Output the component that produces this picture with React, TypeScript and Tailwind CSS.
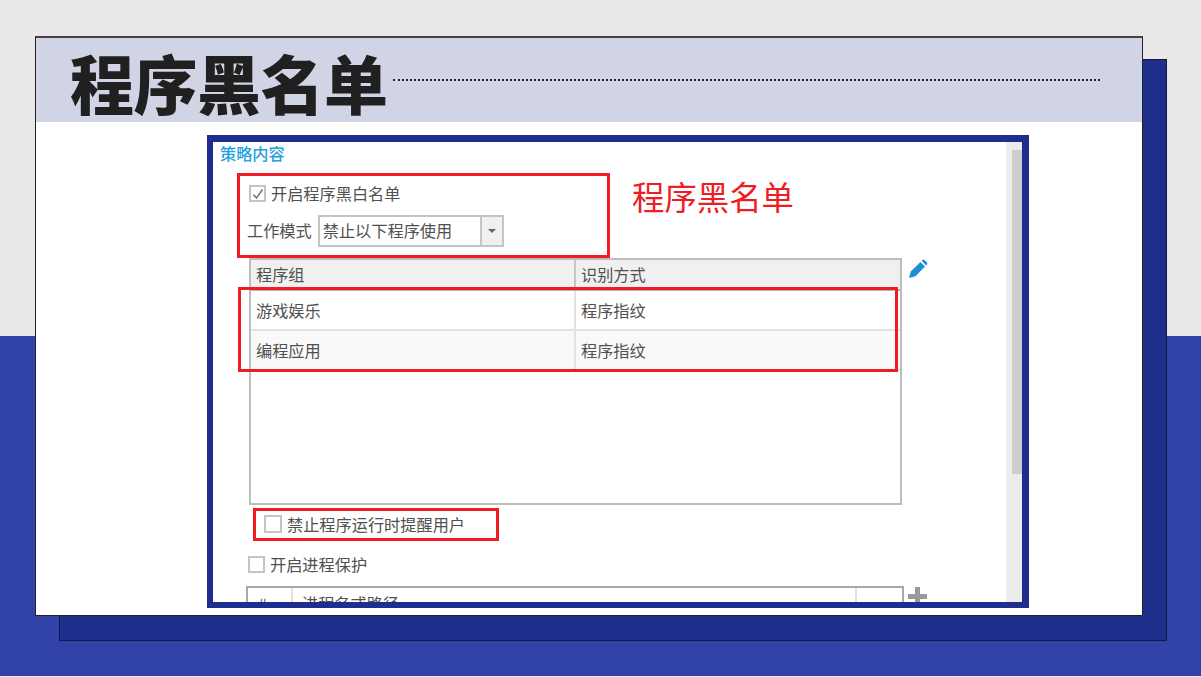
const font = "[font-family:'Noto_Sans_CJK_SC','Noto_Sans',sans-serif]";

function Check({ checked, className }: { checked?: boolean; className: string }) {
  return (
    <span className={`flex items-center justify-center border-2 border-[#c4c4c4] bg-white ${className}`}>
      {checked && (
        <svg width="12" height="12" viewBox="0 0 12 12" fill="none" stroke="#7a7a7a" strokeWidth="1.6">
          <path d="M1.5 6.5 L4.5 10 L10.5 1.5" />
        </svg>
      )}
    </span>
  );
}

function Row({ a, b, alt }: { a: string; b: string; alt?: boolean }) {
  return (
    <div className={`flex h-10 border-b-2 border-[#e2e2e2] ${alt ? "bg-[#f9f9f9]" : "bg-white"}`}>
      <div className="flex w-[325px] items-center border-r-2 border-[#e2e2e2] pl-[5px]">{a}</div>
      <div className="flex flex-1 items-center pl-[5px]">{b}</div>
    </div>
  );
}

function Pencil() {
  return (
    <svg className="ml-[6px] mt-[1px] shrink-0" width="20" height="20" viewBox="0 0 20 20" fill="#1c8fd6">
      <path d="M1 19 L2.8 12.6 L12.4 3 L17 7.6 L7.4 17.2 Z" />
      <path d="M13.6 1.8 L14.4 1 Q15.4 0.2 16.4 1 L19 3.6 Q19.8 4.6 19 5.6 L18.2 6.4 Z" />
    </svg>
  );
}

function Plus() {
  return (
    <svg className="ml-[4px] mt-[1px] shrink-0" width="19" height="19" viewBox="0 0 19 19" fill="#999">
      <path d="M7 0 H12 V7 H19 V12 H12 V19 H7 V12 H0 V7 H7 Z" />
    </svg>
  );
}

export default function App() {
  return (
    <div className={`relative h-[677px] w-[1201px] overflow-hidden bg-[#eef0f3] ${font}`}>
      <div className="h-[336px] bg-[#e9e7e7]" />
      <div className="h-[340px] bg-[#3143a8]" />

      {/* back card */}
      <div className="absolute left-[59px] top-[59px] h-[582px] w-[1108px] border border-[#14193f] bg-[#1e2e8b]" />

      {/* front card */}
      <div className="absolute left-[35px] top-[36px] flex h-[580px] w-[1108px] flex-col border border-[#222] border-t-2 border-t-[#444] bg-white">
        <div className="flex h-[84px] shrink-0 items-center bg-[#d0d4e5] pl-[34px]">
          <h1 className="pt-[2px] text-[64px] font-black leading-none tracking-[-0.5px] text-[#202020]">程序黑名单</h1>
          <div className="ml-[5px] w-[707px] border-t-2 border-dotted border-[#222]" />
        </div>

        {/* screenshot frame */}
        <div className="relative ml-[171px] mt-[13px] h-[473px] w-[822px] overflow-hidden border-y-[6px] border-l-[6px] border-r-[7px] border-t-[7px] border-[#1f2e8e] bg-white text-[16.2px] leading-none text-[#505050]">
          <div className="flex h-full">
            <div className="relative flex-1 overflow-hidden">
              <div className="pl-[7px] pt-[3px] text-[16.2px] font-medium leading-[16px] text-[#1da1e0]">策略内容</div>

              <div className="ml-[36px] mt-[24px] flex items-center gap-[5px]">
                <Check checked className="size-[17px]" />
                <span>开启程序黑白名单</span>
              </div>

              <div className="ml-[34px] mt-[13px] flex items-center gap-[6px]">
                <span className="pb-[2px]">工作模式</span>
                <div className="flex h-[32px] w-[186px] border-2 border-[#c4c4c4] bg-white">
                  <span className="flex flex-1 items-center pb-[2px] pl-[3px]">禁止以下程序使用</span>
                  <span className="flex w-[22px] items-center justify-center border-l-2 border-[#c4c4c4] bg-[#f0f0f0]">
                    <span className="h-0 w-0 border-x-[4px] border-t-[4px] border-x-transparent border-t-[#666]" />
                  </span>
                </div>
              </div>

              <div className="ml-[36px] mt-[11px] flex items-start">
                <div className="h-[247px] w-[653px] border-2 border-[#bdbdbd] bg-white">
                  <div className="flex h-[31px] border-b-2 border-[#b5b5b5] bg-[#f0f0f0]">
                    <div className="flex w-[325px] items-center border-r-2 border-[#c4c4c4] pl-[5px]">程序组</div>
                    <div className="flex flex-1 items-center pl-[5px]">识别方式</div>
                  </div>
                  <Row a="游戏娱乐" b="程序指纹" />
                  <Row a="编程应用" b="程序指纹" alt />
                </div>
                <Pencil />
              </div>

              <div className="ml-[51px] mt-[10px] flex items-center gap-[5px]">
                <Check className="size-[18px]" />
                <span>禁止程序运行时提醒用户</span>
              </div>

              <div className="ml-[35px] mt-[23px] flex items-center gap-[5px]">
                <Check className="size-[17px]" />
                <span>开启进程保护</span>
              </div>

              <div className="ml-[33px] mt-[13px] flex items-start">
                <div className="flex h-[40px] w-[658px] border-2 border-[#a8a8a8] bg-white">
                  <div className="w-[45px] border-r-2 border-[#e2e2e2] pl-[10px] pt-[7px]">#</div>
                  <div className="w-[564px] border-r-2 border-[#e2e2e2] pl-[9px] pt-[7px]">进程名或路径</div>
                </div>
                <Plus />
              </div>

              {/* annotations */}
              <div className="absolute left-[24px] top-[31px] h-[85px] w-[373px] border-[3px] border-[#ee1c25]" />
              <div className="absolute left-[25px] top-[145px] h-[85px] w-[660px] border-[3px] border-[#ee1c25]" />
              <div className="absolute left-[40px] top-[366px] h-[33px] w-[246px] border-[3px] border-[#ee1c25]" />
              <div className="absolute left-[419px] top-[34px] text-[32.4px] leading-[40px] text-[#ee1c25]">程序黑名单</div>
            </div>

            {/* scrollbar */}
            <div className="flex w-[16px] shrink-0 flex-col bg-[#ececec] pl-[6px] pt-[8px]">
              <div className="h-[324px] bg-[#cdcdcd]" />
            </div>
          </div>
        </div>
      </div>
    </div>
  );
}
